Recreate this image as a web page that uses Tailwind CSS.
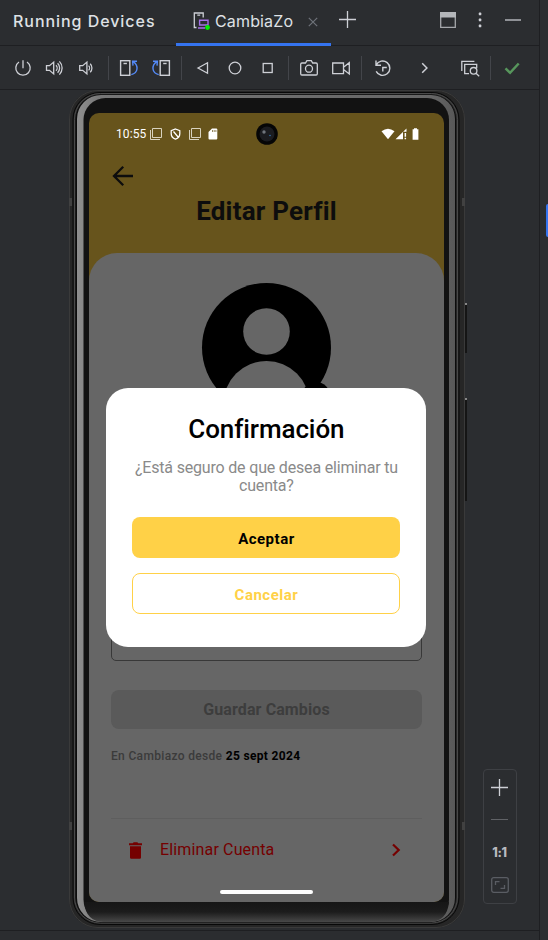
<!DOCTYPE html>
<html lang="es">
<head>
<meta charset="utf-8">
<title>Running Devices</title>
<script src="https://cdn.jsdelivr.net/npm/@tailwindcss/browser@4"></script>
</head>
<body class="w-[548px] h-[940px] overflow-hidden bg-[#2b2d30] font-['Inter',sans-serif]">
<div class="relative flex h-[940px] w-[548px]">
  <div class="flex w-[540px] flex-col border-r border-[#1e1f22]">
    <!-- Tool window header -->
    <header class="flex h-[46px] shrink-0 border-b border-[#1e1f22] pl-[13px] text-[#dfe1e5]">
      <h1 class="w-[163px] pt-[9px] text-[16px] leading-6 font-medium tracking-[0.95px] whitespace-nowrap">Running Devices</h1>
      <div class="flex h-[46px] w-[155px] border-b-[3px] border-[#3574f0] pl-[17px]">
        <svg class="mt-[11px] h-[20px] w-[20px] shrink-0" viewBox="0 0 20 20" fill="none">
          <path d="M3.500 16.500H1.300V2h8.900v4.500M4.300 4.200h2.900" stroke="#ced0d6" stroke-width="1.300"/>
          <path d="M6.600 9.200h8.400v4.800H6.600zM5 17h7" stroke="#a571e6" stroke-width="1.400"/>
          <circle cx="14.500" cy="16.500" r="2.400" fill="#00f000"/>
        </svg>
        <span class="ml-[2px] w-[93px] pt-[9px] text-[16px] leading-6 tracking-[0.150px]">CambiaZo</span>
        <svg class="mt-[17px] h-[10px] w-[10px]" viewBox="0 0 10 10"><path d="M.8.8l8.4 8.4M9.2.8L.8 9.2" stroke="#6f737a" stroke-width="1.200"/></svg>
      </div>
      <svg class="mt-[11px] ml-[8px] h-[17px] w-[17px]" viewBox="0 0 17 17"><path d="M8.500 0v17M0 8.500h17" stroke="#ced0d6" stroke-width="1.300"/></svg>
      <svg class="mt-[12px] ml-[84px] h-[16px] w-[16px]" viewBox="0 0 16 16"><path d="M.7.7h14.6v14.6H.7z" fill="none" stroke="#a5a7ab" stroke-width="1.300"/><path d="M0 0h16v5.500H0z" fill="#b4b6ba"/></svg>
      <svg class="mt-[12px] ml-[22px] h-[16px] w-[4px]" viewBox="0 0 4 16" fill="#ced0d6"><rect x=".8" y=".6" width="2.500" height="2.700" rx=".6"/><rect x=".8" y="6.600" width="2.500" height="2.700" rx=".6"/><rect x=".8" y="12.600" width="2.500" height="2.700" rx=".6"/></svg>
      <div class="mt-[19px] ml-[23px] h-[2px] w-[16px] bg-[#8f9196]"></div>
    </header>

    <!-- Device toolbar -->
    <div class="flex h-[44px] shrink-0 items-center border-b border-[#1e1f22] pl-[7px] text-[#ced0d6]">
      <svg class="h-5 w-8" viewBox="0 0 32 20" fill="none" stroke="currentColor" stroke-width="1.300"><path d="M16 2.200v8M12 4a7.200 7.200 0 1 0 8 0"/></svg>
      <svg class="h-5 w-8" viewBox="0 0 32 20" fill="none" stroke="currentColor" stroke-width="1.300"><path d="M7.500 7.700h3l4.200-3.600v11.800l-4.200-3.600h-3zM17 7.200c1.500 1.500 1.500 4.100 0 5.600M18.600 5.300c2.700 2.700 2.700 6.700 0 9.400M20.400 3.400c3.600 3.700 3.600 9.500 0 13.200"/></svg>
      <svg class="h-5 w-8" viewBox="0 0 32 20" fill="none" stroke="currentColor" stroke-width="1.300"><path d="M8.700 7.700h3l4.200-3.600v11.800l-4.200-3.600h-3zM17.600 7.600c1.300 1.300 1.300 3.500 0 4.800M19.200 5.800c2.300 2.300 2.300 6.100 0 8.400"/></svg>
      <div class="mr-[4px] ml-[5px] h-6 w-px bg-[#43454a]"></div>
      <svg class="h-5 w-8" viewBox="0 0 32 20" fill="none" stroke-width="1.400"><rect x="7.600" y="2.700" width="9.200" height="14.600" stroke="currentColor"/><path d="M10.500 5.500h3.400" stroke="currentColor"/><path d="M18.300 16.600c7-1.500 7.500-9 2-13M24 3.200l-4.400.1.400 4.300" stroke="#548af7"/></svg>
      <svg class="h-5 w-8" viewBox="0 0 32 20" fill="none" stroke-width="1.400"><rect x="15.200" y="2.700" width="9.200" height="14.600" stroke="currentColor"/><path d="M18.200 5.500h3.400" stroke="currentColor"/><path d="M13.700 16.600c-7-1.500-7.500-9-2-13M8 3.200l4.400.1-.400 4.300" stroke="#548af7"/></svg>
      <div class="ml-[4px] mr-[5px] h-6 w-px bg-[#43454a]"></div>
      <svg class="h-5 w-8" viewBox="0 0 32 20" fill="none" stroke="currentColor" stroke-width="1.300"><path d="M11 10l9.500-5.200v10.400z"/></svg>
      <svg class="h-5 w-8" viewBox="0 0 32 20" fill="none" stroke="currentColor" stroke-width="1.300"><circle cx="16" cy="10" r="5.800"/></svg>
      <svg class="h-5 w-8" viewBox="0 0 32 20" fill="none" stroke="currentColor" stroke-width="1.300"><rect x="12.200" y="5.500" width="9" height="9"/></svg>
      <div class="mr-[4px] ml-[5px] h-6 w-px bg-[#43454a]"></div>
      <svg class="h-5 w-8" viewBox="0 0 32 20" fill="none" stroke="currentColor" stroke-width="1.300"><path d="M8.900 5h3.600l1.400-2.300h4.400L19.700 5h3.400q1.200 0 1.200 1.200v9.600q0 1.200-1.200 1.200H8.900q-1.200 0-1.200-1.200V6.200Q7.700 5 8.900 5z"/><circle cx="16" cy="10.700" r="3.500"/></svg>
      <svg class="h-5 w-8" viewBox="0 0 32 20" fill="none" stroke="currentColor" stroke-width="1.300"><path d="M7.700 5h10.800v10.600H7.700zM18.500 9.200l5.800-4.500v11.200l-5.800-4.500"/></svg>
      <div class="ml-[4px] mr-[5px] h-6 w-px bg-[#43454a]"></div>
      <svg class="h-5 w-8" viewBox="0 0 32 20" fill="none" stroke="currentColor" stroke-width="1.400"><path d="M9.200 7a7.200 7.200 0 1 1 0 6.400M9 2.500v4.800h5M15.800 13.500v-4h4"/></svg>
      <svg class="ml-[9px] h-5 w-8" viewBox="0 0 32 20" fill="none" stroke="currentColor" stroke-width="1.500"><path d="M14.200 5.300l4.700 4.700-4.700 4.700"/></svg>
      <svg class="ml-[14px] h-5 w-8" viewBox="0 0 32 20" fill="none" stroke="currentColor" stroke-width="1.300"><path d="M7.800 13V3.400h12.600M15 15.700h-4.300V6.300h12v4"/><circle cx="19.600" cy="12.800" r="3.300"/><path d="M22 15.200l3.200 3.100"/></svg>
      <div class="mr-[5px] ml-[4px] h-6 w-px bg-[#43454a]"></div>
      <svg class="h-5 w-8" viewBox="0 0 32 20" fill="none" stroke="#57965c" stroke-width="2.500"><path d="M9.500 10.300l4.600 4.500 8.600-9.300"/></svg>
    </div>

    <!-- Device view -->
    <div class="flex h-[841px] shrink-0 border-b border-[#1e1f22] pl-[69px]">
      <div class="relative h-[840px] w-[396px] shrink-0 pt-[23px] pl-[20px]">
        <svg class="absolute top-0 left-0 h-[840px] w-[400px]" viewBox="0 0 400 840" fill="none">
          <defs>
            <linearGradient id="rim" x1="0" x2="1" y1="0" y2="0"><stop offset="0" stop-color="#8f8f8f"/><stop offset=".06" stop-color="#777"/><stop offset=".94" stop-color="#666"/><stop offset="1" stop-color="#585858"/></linearGradient>
            <linearGradient id="chin" x1="0" x2="0" y1="0" y2="1"><stop offset="0" stop-color="#161616"/><stop offset=".5" stop-color="#1c1c1c"/><stop offset="1" stop-color="#484848"/></linearGradient>
          </defs>
          <path d="M394 215h4v48h-4zM394 310h4v101h-4z" fill="#151515"/>
          <path d="M395 213h3v2h-3zM395 308h3v2h-3z" fill="#888"/>
          <rect x="0" y="0" width="396" height="838" rx="29" fill="#262626"/>
          <rect x=".5" y=".5" width="395" height="837" rx="28.500" stroke="#3a3a3a"/>
          <rect x="4" y="2.500" width="386" height="832" rx="27" stroke="#080808"/>
          <rect x="5.500" y="3.500" width="383" height="829.500" rx="26" stroke="#4a4a4a"/>
          <rect x="6.500" y="4.500" width="380.500" height="828" rx="25" fill="#0c0c0c"/>
          <rect x="8" y="5" width="378" height="827" rx="24" fill="url(#rim)"/>
          <rect x="14.500" y="8" width="365.500" height="823.500" rx="22" fill="#121212"/>
          <path d="M15 812h365q-2 20-20 20H35q-18 0-20-20z" fill="url(#chin)"/>
          <path d="M0 108h3v8H0zM393 108h3v8h-3zM0 732h3v8H0zM393 732h3v8h-3z" fill="#414141"/>
        </svg>

        <!-- Phone screen -->
        <main class="relative flex h-[789px] w-[355px] flex-col overflow-hidden rounded-[10px] bg-[#67541c] font-['Roboto',sans-serif]">
          <div class="flex h-[42px] shrink-0 items-center pl-[27px] text-white">
            <span class="w-[34px] text-[12px] leading-4 tracking-[0.1px]">10:55</span>
            <svg class="h-[12px] w-[12px]" viewBox="0 0 12 12" fill="none" stroke="#d8d2bf"><path d="M2.500.500h9v9h-9z"/><path d="M.500 2v9.500h9.500"/></svg>
            <svg class="ml-[8px] h-[12px] w-[11px]" viewBox="0 0 11 12" fill="none" stroke="#fff" stroke-width="1.300"><path d="M5.500 1l4.300 1.600v3.200c0 2.600-1.900 4.500-4.300 5.300C3.100 10.300 1.200 8.400 1.200 5.800V2.600zM3.500 3.500l5 6"/></svg>
            <svg class="ml-[8px] h-[12px] w-[12px]" viewBox="0 0 12 12" fill="none" stroke="#d8d2bf"><path d="M2.500.500h9v9h-9z"/><path d="M.500 2v9.500h9.500"/></svg>
            <svg class="ml-[7px] h-[12px] w-[10px]" viewBox="0 0 10 12"><path d="M4 .5h4.300q1 0 1 1v9q0 1-1 1H1.500q-1 0-1-1V4z" fill="#fff"/><path d="M4.500 2v2M6.200 2v2M7.900 2v2" stroke="#67541c" stroke-width=".7"/></svg>
            <svg class="ml-[37.500px] h-[22px] w-[22px]" viewBox="0 0 22 22"><circle cx="11" cy="11" r="10.800" fill="#060606"/><circle cx="11" cy="11" r="7.500" fill="#1b1c20"/><circle cx="8" cy="9" r="1.700" fill="#70757c"/><circle cx="14" cy="12.500" r=".8" fill="#3571a8"/></svg>
            <svg class="ml-[103.500px] h-[12px] w-[14px]" viewBox="0 0 14 12" fill="#fff"><path d="M.5 3.200Q7-1.800 13.500 3.200L7 11.200z"/></svg>
            <svg class="h-[12px] w-[12px]" viewBox="0 0 12 12" fill="#fff"><path d="M.5 11.200L11.500.5v3.300H8v7.400zM9.600 5h1.500v3.800H9.600zM9.600 9.800h1.500v1.500H9.600z"/></svg>
            <svg class="ml-[5px] h-[12px] w-[7px]" viewBox="0 0 7 12" fill="#fff"><path d="M2 .3h3v1h1.400v10.400H.6V1.300H2z"/></svg>
          </div>
          <svg class="mt-[10px] ml-[23px] h-[22px] w-[22px] shrink-0" viewBox="0 0 22 22" fill="none" stroke="#0d0d0d" stroke-width="2.300"><path d="M21 11H2.500M11.200 1.800L2 11l9.200 9.200"/></svg>
          <h2 class="mt-[8px] h-[32px] text-center text-[26px] leading-8 font-bold tracking-[0.2px] text-[#0d0d0d]">Editar Perfil</h2>
          <section class="mt-[26px] flex grow flex-col rounded-t-[28px] bg-[#666] px-[22px] pt-[30px]">
            <svg class="h-[134px] w-[134px] shrink-0 self-center" viewBox=".5 0 134 134"><circle cx="67" cy="64.500" r="64.500"/><circle cx="67" cy="48.500" r="23.300" fill="#666"/><circle cx="67" cy="121" r="43" fill="#666"/><circle cx="116.500" cy="113" r="14"/></svg>
            <div class="mt-[204px] h-[40px] rounded-[5px] border border-[#383838]"></div>
            <div class="mt-[29px] h-[39px] shrink-0 rounded-[8px] bg-[#5a5a5a] text-center text-[16px] leading-[39px] font-bold tracking-[0.1px] text-[#3d3d3d]">Guardar Cambios</div>
            <p class="mt-[19px] text-[12px] leading-4 font-medium tracking-[0.330px] whitespace-nowrap text-[#3b3b3b]">En Cambiazo desde <b class="text-black">25 sept 2024</b></p>
            <div class="mt-[54px] h-px shrink-0 bg-[#5e5e5e]"></div>
            <div class="flex h-[62px] items-center pl-[18px] text-[#750000]">
              <svg class="h-[17px] w-[13px]" viewBox="0 0 13 17" fill="currentColor"><path d="M0 1.300h3.700L4.700.300h3.600l1 1H13v2H0zM1 4.300h11v11.200q0 1.200-1.200 1.200H2.200Q1 16.700 1 15.500z"/></svg>
              <span class="ml-[18px] w-[232px] text-[16px] leading-5 tracking-[0.150px]">Eliminar Cuenta</span>
              <svg class="h-[14px] w-[9px]" viewBox="0 0 9 14" fill="none" stroke="currentColor" stroke-width="2.200"><path d="M1 1.500L6.700 7 1 12.500"/></svg>
            </div>
            <div class="mt-[9px] h-[3.500px] w-[93px] shrink-0 self-center rounded-full bg-white"></div>
          </section>

          <!-- Confirmation dialog -->
          <div class="absolute top-[275.400px] left-[17.400px] flex h-[259px] w-[320px] flex-col rounded-[22px] bg-white px-[26px] pt-[25px] text-center">
            <h3 class="text-[26px] leading-8 font-medium tracking-[-0.1px] text-black">Confirmación</h3>
            <p class="mt-[14px] text-[16px] leading-[18px] tracking-[-0.180px] whitespace-nowrap text-[#8a8a8a]">¿Está seguro de que desea eliminar tu<br>cuenta?</p>
            <button class="mt-[22px] h-[41px] shrink-0 rounded-[8px] bg-[#ffd147] pt-[2px] text-[15px] font-bold tracking-[0.5px] text-black">Aceptar</button>
            <button class="mt-[15px] h-[41px] shrink-0 rounded-[8px] border border-[#ffd147] pt-[2px] text-[15px] font-bold tracking-[0.5px] text-[#ffd147]">Cancelar</button>
          </div>
        </main>
      </div>

      <!-- Zoom controls -->
      <div class="mb-[26px] ml-[18px] flex h-[135px] w-[34px] flex-col items-center self-end rounded-[4px] border border-[#3e4044] text-[#ced0d6]">
        <svg class="mt-[9px] mr-px h-[17px] w-[17px] shrink-0" viewBox="0 0 17 17"><path d="M8.500 0v17M0 8.500h17" stroke="currentColor" stroke-width="1.300"/></svg>
        <div class="mt-[23px] mr-px h-px w-[17px] shrink-0 bg-[#606266]"></div>
        <span class="mt-[25px] mr-px text-[12.500px] leading-4 font-extrabold tracking-[-0.3px] text-[#b9bbc0]">1:1</span>
        <svg class="mt-[16px] h-[16px] w-[18px] shrink-0" viewBox="0 0 18 16" fill="none" stroke="#5a5d63" stroke-width="1.300"><rect x=".7" y=".7" width="16.600" height="14.600" rx="2"/><path d="M4.500 8V4.700h4M13.500 8v3.300h-4"/></svg>
      </div>
    </div>
  </div>
  <div class="mt-[204px] ml-[6px] h-[33px] w-[2px] rounded-l-[4px] bg-[#3574f0]"></div>
</div>
</body>
</html>
